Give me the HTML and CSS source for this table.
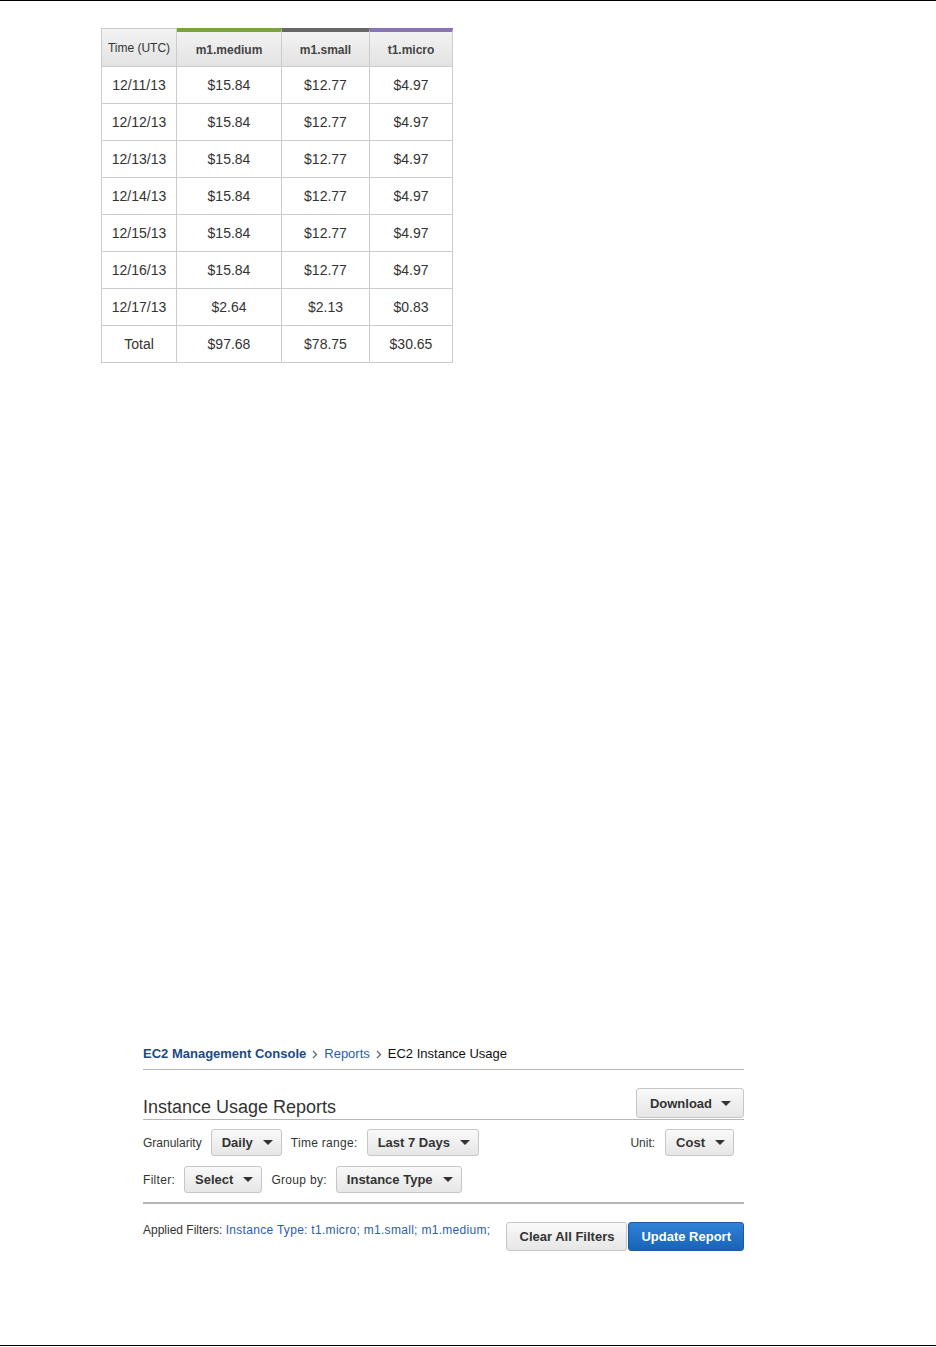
FILE: index.html
```html
<!DOCTYPE html>
<html>
<head>
<meta charset="utf-8">
<link rel="stylesheet" href="styles.css">
</head>
<body>
<div class="page">
  <table class="usage">
    <thead>
      <tr class="head-row">
        <th class="c-time">Time (UTC)</th>
        <th class="c-med bar-green">m1.medium</th>
        <th class="c-small bar-gray">m1.small</th>
        <th class="c-micro bar-purple">t1.micro</th>
      </tr>
    </thead>
    <tbody>
      <tr><td>12/11/13</td><td>$15.84</td><td>$12.77</td><td>$4.97</td></tr>
      <tr><td>12/12/13</td><td>$15.84</td><td>$12.77</td><td>$4.97</td></tr>
      <tr><td>12/13/13</td><td>$15.84</td><td>$12.77</td><td>$4.97</td></tr>
      <tr><td>12/14/13</td><td>$15.84</td><td>$12.77</td><td>$4.97</td></tr>
      <tr><td>12/15/13</td><td>$15.84</td><td>$12.77</td><td>$4.97</td></tr>
      <tr><td>12/16/13</td><td>$15.84</td><td>$12.77</td><td>$4.97</td></tr>
      <tr><td>12/17/13</td><td>$2.64</td><td>$2.13</td><td>$0.83</td></tr>
      <tr><td>Total</td><td>$97.68</td><td>$78.75</td><td>$30.65</td></tr>
    </tbody>
  </table>

  <section class="console">
    <nav class="crumbs">
      <a class="crumb-root">EC2 Management Console</a>
      <svg class="chev" width="6" height="9" viewBox="0 0 6 9"><path d="M1 1 L4.5 4.5 L1 8" fill="none" stroke="#666" stroke-width="1.3"/></svg>
      <a class="crumb-link">Reports</a>
      <svg class="chev" width="6" height="9" viewBox="0 0 6 9"><path d="M1 1 L4.5 4.5 L1 8" fill="none" stroke="#666" stroke-width="1.3"/></svg>
      <span class="crumb-current">EC2 Instance Usage</span>
    </nav>

    <div class="title-row">
      <h1 class="title">Instance Usage Reports</h1>
      <button class="btn btn-download">Download<svg class="caret" width="10" height="5" viewBox="0 0 10 5"><path d="M0 0 H10 L5 5 Z" fill="#333"/></svg></button>
    </div>

    <div class="controls">
      <div class="ctrl-row">
        <span class="lbl">Granularity</span>
        <button class="btn">Daily<svg class="caret" width="10" height="5" viewBox="0 0 10 5"><path d="M0 0 H10 L5 5 Z" fill="#333"/></svg></button>
        <span class="lbl lbl-wide">Time range:</span>
        <button class="btn">Last 7 Days<svg class="caret" width="10" height="5" viewBox="0 0 10 5"><path d="M0 0 H10 L5 5 Z" fill="#333"/></svg></button>
        <div class="unit-group">
          <span class="lbl">Unit:</span>
          <button class="btn">Cost<svg class="caret" width="10" height="5" viewBox="0 0 10 5"><path d="M0 0 H10 L5 5 Z" fill="#333"/></svg></button>
        </div>
      </div>
      <div class="ctrl-row">
        <span class="lbl lbl-wide">Filter:</span>
        <button class="btn">Select<svg class="caret" width="10" height="5" viewBox="0 0 10 5"><path d="M0 0 H10 L5 5 Z" fill="#333"/></svg></button>
        <span class="lbl lbl-wide">Group by:</span>
        <button class="btn">Instance Type<svg class="caret" width="10" height="5" viewBox="0 0 10 5"><path d="M0 0 H10 L5 5 Z" fill="#333"/></svg></button>
      </div>
    </div>

    <div class="applied">
      <p class="applied-text">Applied Filters: <span class="applied-val">Instance Type: t1.micro; m1.small; m1.medium;</span></p>
      <div class="actions">
        <button class="btn btn-plain">Clear All Filters</button>
        <button class="btn btn-primary">Update Report</button>
      </div>
    </div>
  </section>
</div>
</body>
</html>
```

FILE: styles.css
```css
html, body {
  margin: 0;
  padding: 0;
  background: #fff;
}

body {
  font-family: "Liberation Sans", Arial, sans-serif;
  color: #333;
}

.page {
  box-sizing: border-box;
  height: 1346px;
  border-top: 1px solid #000;
  border-bottom: 1px solid #000;
  padding: 27px 0 0 0;
  display: flex;
  flex-direction: column;
}

/* ---------- table ---------- */
.usage {
  margin-left: 101px;
  border-collapse: separate;
  border-spacing: 0;
  table-layout: fixed;
  width: 352px;
}

.usage th,
.usage td {
  box-sizing: border-box;
  padding: 0;
  text-align: center;
  vertical-align: middle;
  border-right: 1px solid #ccc;
  border-bottom: 1px solid #ccc;
}

.usage th:first-child,
.usage td:first-child {
  border-left: 1px solid #ccc;
}

.usage .head-row {
  height: 39px;
}

.usage th {
  background: linear-gradient(#f2f2f2, #e3e3e3);
  color: #444;
  font-size: 12px;
  font-weight: bold;
  padding-top: 2px;
}

.usage th.c-time {
  font-weight: normal;
  border-top: 1px solid #ccc;
  width: 76px;
  padding-top: 0;
  color: #333;
}

.usage th.c-med { width: 105px; }
.usage th.c-small { width: 88px; }
.usage th.c-micro { width: 83px; }

.bar-green { border-top: 4px solid #7aa33e; }
.bar-gray { border-top: 4px solid #666; }
.bar-purple { border-top: 4px solid #8a72b6; }

.usage tbody tr {
  height: 37px;
}

.usage td {
  font-size: 14px;
  color: #333;
}

/* ---------- console ---------- */
.console {
  margin: 683px 0 0 143px;
  width: 601px;
}

.crumbs {
  font-size: 13px;
  line-height: 16px;
  padding-bottom: 7px;
  border-bottom: 1px solid #b3b3b3;
  display: flex;
  align-items: center;
  gap: 6px;
}

.crumb-root {
  font-weight: bold;
  color: #1b4a86;
}

.crumb-link {
  color: #2a5ea6;
}

.crumb-current {
  color: #111;
}

.chev {
  display: block;
}

.title-row {
  margin-top: 18px;
  display: flex;
  justify-content: space-between;
  align-items: flex-end;
  padding-bottom: 1px;
  border-bottom: 1px solid #b8b8b8;
}

.title {
  margin: 0 0 1px 0;
  font-size: 18px;
  line-height: 20px;
  font-weight: normal;
  color: #333;
}

.btn {
  box-sizing: border-box;
  height: 27px;
  display: inline-flex;
  align-items: center;
  gap: 10px;
  padding: 0 8px 0 10px;
  font-family: "Liberation Sans", Arial, sans-serif;
  font-size: 13px;
  font-weight: bold;
  color: #333;
  background: linear-gradient(#f9f9f9, #e6e6e6);
  border: 1px solid #c6c6c6;
  border-radius: 3px;
  cursor: pointer;
}

.caret {
  display: block;
  flex: none;
}

.btn-download {
  height: 30px;
  padding: 0 12px 0 13px;
  gap: 9px;
}

.controls {
  padding: 9px 0 9px 0;
  border-bottom: 2px solid #b5b5b5;
  display: flex;
  flex-direction: column;
  gap: 10px;
}

.ctrl-row {
  display: flex;
  align-items: center;
  gap: 9px;
}

.lbl {
  font-size: 12px;
  color: #333;
}

.lbl-wide {
  letter-spacing: 0.3px;
}

.unit-group {
  margin-left: auto;
  margin-right: 10px;
  display: flex;
  align-items: center;
  gap: 10px;
}

.applied {
  margin-top: 18px;
  display: flex;
  align-items: flex-start;
}

.applied-text {
  margin: 0;
  padding-top: 1px;
  font-size: 12px;
  line-height: 15px;
  color: #333;
}

.applied-val {
  color: #2a5ea6;
  letter-spacing: 0.3px;
}

.actions {
  margin-left: auto;
  display: flex;
  gap: 1px;
}

.btn-plain,
.btn-primary {
  height: 29px;
  padding: 0 12px;
}

.btn-plain {
  padding: 0 12px 0 13px;
}

.btn-primary {
  color: #fff;
  background: linear-gradient(#2f82d8, #1863b6);
  border-color: #1a5aa3;
}
```
